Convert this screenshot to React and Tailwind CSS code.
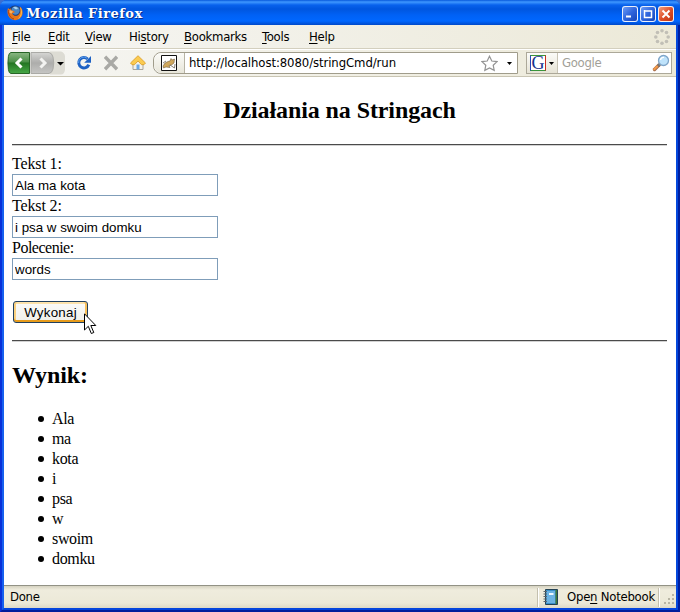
import React from "react";

const MENU = [
  { key: "F", before: "", after: "ile", box: "w-9" },
  { key: "E", before: "", after: "dit", box: "w-[37px]" },
  { key: "V", before: "", after: "iew", box: "w-11" },
  { key: "s", before: "Hi", after: "tory", box: "w-[55px]" },
  { key: "B", before: "", after: "ookmarks", box: "w-[78px]" },
  { key: "T", before: "", after: "ools", box: "w-[47px]" },
  { key: "H", before: "", after: "elp", box: "w-10" },
];

const FIELDS = [
  { label: "Tekst 1:", value: "Ala ma kota", tracking: "tracking-[-0.15px]" },
  { label: "Tekst 2:", value: "i psa w swoim domku", tracking: "tracking-[-0.15px]" },
  { label: "Polecenie:", value: "words", tracking: "tracking-[-0.5px]" },
];

const RESULT = ["Ala", "ma", "kota", "i", "psa", "w", "swoim", "domku"];

const UI_FONT = "font-['DejaVu_Sans_Condensed','DejaVu_Sans',sans-serif] [font-stretch:condensed]";

function FirefoxLogo() {
  return (
    <svg className="h-4 w-4" viewBox="0 0 16 16">
      <circle cx="8" cy="7.5" r="7" fill="#1d3b78" />
      <circle cx="8.5" cy="5.5" r="4.2" fill="#4b87c6" />
      <path d="M6 2.5C8 1 10 2 11 3.5L9 4.5Z" fill="#a9d3f2" />
      <path d="M1 3 C0 6 0 11 4 14 C9 17 16 14 15.6 7 C15.5 4 14 2 12.5 1.5 C14 5 13.5 9 10.5 10.5 C8 11.5 5.5 10 5.3 8.2 L8 7.2 L6.5 5.8 L4 5.2 L3.6 3.2 L2.3 4.3 Z" fill="#e8761a" />
      <path d="M13 2 C16 5 16 12 10.5 14.3 C14 11 14.8 7 13 2Z" fill="#f9bd4a" />
      <path d="M2.3 5L4 5.4L6 6.5L4.6 8.5L2.5 8Z" fill="#f6b36a" />
      <path d="M1.8 5 C1 9 3 13 7 14" fill="none" stroke="#ad3d12" />
    </svg>
  );
}

function WindowButton({ kind }) {
  const tone =
    kind === "close"
      ? "bg-linear-to-br from-[#f29b78] via-[#df5029] to-[#bd3210]"
      : "bg-linear-to-br from-[#6c9bf5] via-[#2f65dd] to-[#1745b8]";
  return (
    <div className={`h-4 w-4 rounded-[3px] border border-white/90 ${tone}`}>
      <svg className="h-3.5 w-3.5" viewBox="0 0 14 14" fill="none" stroke="#fff">
        {kind === "min" && <path d="M3 9.5H8" strokeWidth="2" />}
        {kind === "max" && <path d="M3.5 3V10.5H10.5V4H3.5" strokeWidth="1.5" />}
        {kind === "close" && <path d="M3.5 3.5L10.5 10.5M10.5 3.5L3.5 10.5" strokeWidth="2" />}
      </svg>
    </div>
  );
}

function TitleBar() {
  return (
    <div className="flex h-[25px] shrink-0 items-center bg-[linear-gradient(180deg,#0759dc_0,#3f98ff_2px,#0862ed_5px,#0056df_9px,#0061f5_15px,#0067ff_21px,#0049c9_25px)] pr-1.5 pl-[7px]">
      <FirefoxLogo />
      <span className="mt-[3px] ml-[3px] grow font-['DejaVu_Serif',serif] text-[13px] font-bold tracking-[0.48px] whitespace-nowrap text-white [text-shadow:1px_1px_#0a2c87]">
        Mozilla Firefox
      </span>
      <div className="mt-[3px] flex gap-0.5">
        <WindowButton kind="min" />
        <WindowButton kind="max" />
        <WindowButton kind="close" />
      </div>
    </div>
  );
}

function Throbber() {
  return (
    <svg className="h-4 w-4" viewBox="0 0 16 16" fill="#c1bfb6">
      <circle cx="8" cy="1.8" r="1.8" />
      <circle cx="12.5" cy="3.5" r="1.8" />
      <circle cx="14.2" cy="8" r="1.8" />
      <circle cx="12.5" cy="12.5" r="1.8" />
      <circle cx="8" cy="14.2" r="1.8" />
      <circle cx="3.5" cy="12.5" r="1.8" />
      <circle cx="1.8" cy="8" r="1.8" />
      <circle cx="3.5" cy="3.5" r="1.8" />
    </svg>
  );
}

function MenuBar() {
  return (
    <div className={`flex h-6 shrink-0 items-center border-b border-[#d3cfbe] bg-linear-to-r from-[#f6f6f4] to-[#ece9d8] pr-1.5 pl-2 text-[13px] tracking-[-0.27px] text-black ${UI_FONT}`}>
      {MENU.map((m) => (
        <span key={m.key} className={`shrink-0 whitespace-nowrap ${m.box}`}>
          {m.before}
          <u className="underline-offset-2">{m.key}</u>
          {m.after}
        </span>
      ))}
      <span className="grow" />
      <Throbber />
    </div>
  );
}

function NavButtons() {
  return (
    <svg className="h-6 w-[61px] shrink-0" viewBox="0 0 61 24">
      <defs>
        <linearGradient id="back" x2="0" y2="1">
          <stop stopColor="#8bb884" />
          <stop offset=".45" stopColor="#4b8f47" />
          <stop offset=".5" stopColor="#237522" />
          <stop offset="1" stopColor="#47a846" />
        </linearGradient>
        <linearGradient id="fwd" x2="0" y2="1">
          <stop stopColor="#d6d6d4" />
          <stop offset=".5" stopColor="#adadab" />
          <stop offset="1" stopColor="#c6c6c4" />
        </linearGradient>
      </defs>
      <path d="M46 .5H57Q60 1 61 5Q62.5 12 61 19Q60 23.5 57 23.5H46Z" fill="#dddcd4" />
      <path d="M27 1.5H45Q48 2 49 6Q50.5 12 49 18Q48 22 45 22.5H27Z" fill="url(#fwd)" stroke="#aaaaa6" />
      <path d="M7 1.5H25.5V22.5H7Q5 22.5 4.4 18.5Q3.5 12 4.4 5.5Q5 1.5 7 1.5Z" fill="url(#back)" stroke="#276526" />
      <path d="M17.5 7.5L13 12L17.5 16.5" fill="none" stroke="#fff" strokeWidth="3" />
      <path d="M36.5 7.5L41 12L36.5 16.5" fill="none" stroke="#f3f3f1" strokeWidth="3" />
      <path d="M53 11H60L56.5 14.5Z" fill="#000" />
    </svg>
  );
}

function ReloadIcon() {
  return (
    <svg className="h-4 w-4 shrink-0" viewBox="0 0 16 16">
      <path d="M11.6 4A5.2 5.2 0 1 0 12.8 9.6" fill="none" stroke="#1e62c4" strokeWidth="3" />
      <path d="M15 1V7.8H8.2Z" fill="#1e62c4" />
      <path d="M11 3.2A5.2 5.2 0 0 0 2.6 8" fill="none" stroke="#5a9cea" strokeWidth="1" />
    </svg>
  );
}

function StopIcon() {
  return (
    <svg className="h-4 w-4 shrink-0" viewBox="0 0 16 16">
      <path d="M2 1.8L14 14.2M14 1.8L2 14.2" stroke="#a9a9a5" strokeWidth="3.4" />
    </svg>
  );
}

function HomeIcon() {
  return (
    <svg className="h-4 w-4 shrink-0" viewBox="0 0 16 16">
      <path d="M3 7.5L8 3L13 7.5V14.5H3Z" fill="#f3f2ec" stroke="#a9a59a" />
      <path d="M6.5 9.5H9.5V14.5H6.5Z" fill="#6aa8e6" />
      <path d="M8 .7L15.5 8L14 9.7H11.5L8 6L4.5 9.7H2L.5 8Z" fill="#fbcb50" stroke="#d99a25" strokeWidth=".8" />
    </svg>
  );
}

function CatIcon() {
  return (
    <svg className="h-4 w-4" viewBox="0 0 16 16">
      <path d="M.5 .5H15.5V15.5H.5Z" fill="#fff" stroke="#111" />
      <path d="M2 11L4 8L7 6.5L9 6L10 3.5L11 5L13.5 4L13 8L10.5 10L8 10.5L9 12.5L5 12L2.5 13Z" fill="#cfa75c" stroke="#5d4a2a" strokeWidth=".5" />
      <path d="M9 10L13.5 13L14 9M2 8L5 6" fill="none" stroke="#6b6355" strokeWidth=".8" />
    </svg>
  );
}

function Caret() {
  return (
    <svg className="h-[3px] w-[5px] shrink-0" viewBox="0 0 5 3">
      <path d="M0 0H5L2.5 3Z" fill="#000" />
    </svg>
  );
}

function AddressBar() {
  return (
    <div className="ml-[7px] flex h-[22px] w-[365px] shrink-0 items-center rounded-l-lg border border-[#a09c8b] bg-white">
      <div className="flex h-full w-[31px] items-center justify-center rounded-l-lg border-r border-[#b7b3a4] bg-linear-to-b from-[#fbfbf8] to-[#e8e6da]">
        <CatIcon />
      </div>
      <span className="ml-1 grow text-[13px] tracking-[-0.09px] whitespace-nowrap">http://localhost:8080/stringCmd/run</span>
      <svg className="mr-[9px] h-[17px] w-[17px]" viewBox="0 0 17 17">
        <path d="M8.5 1.2L10.8 6L16 6.6L12.2 10.2L13.2 15.4L8.5 12.9L3.8 15.4L4.8 10.2L1 6.6L6.2 6Z" fill="#fff" stroke="#949494" strokeWidth="1.2" />
      </svg>
      <Caret />
      <span className="w-[5px]" />
    </div>
  );
}

function SearchBar() {
  return (
    <div className="ml-2 flex h-[22px] w-[146px] shrink-0 items-center border border-[#aca899] bg-white">
      <div className="flex h-full w-[31px] items-center gap-[3px] border-r border-[#c8c4b5] bg-linear-to-b from-[#fbfbf8] to-[#e6e3d5] pl-[3px]">
        <div className="flex h-4 w-4 items-center justify-center border border-t-[#39953b] border-r-[#c92c20] border-b-[#39953b] border-l-[#2748bd] bg-white font-['Liberation_Serif',serif] text-[18px] leading-none text-[#16318d]">
          G
        </div>
        <Caret />
      </div>
      <span className="ml-1 grow text-[13px] tracking-[-0.3px] text-[#a29f98]">Google</span>
      <svg className="mr-px h-[18px] w-[18px]" viewBox="0 0 18 18">
        <path d="M2.5 15.5L7 11" stroke="#a2694a" strokeWidth="3.4" strokeLinecap="round" />
        <path d="M2.3 15.2L5 12.5" stroke="#f29a4a" strokeWidth="2.2" strokeLinecap="round" />
        <path d="M6 12L8 10" stroke="#777" strokeWidth="2.5" />
        <circle cx="11.5" cy="6.5" r="5" fill="#bfe3fb" stroke="#7fa5c8" strokeWidth="1.3" />
        <path d="M8.5 6A3.3 3.3 0 0 1 12 3.3" fill="none" stroke="#fff" strokeWidth="1.3" />
      </svg>
    </div>
  );
}

function Toolbar() {
  return (
    <div className={`flex h-7 shrink-0 items-center border-t border-b border-t-white border-b-[#c9c5b3] bg-linear-to-r from-[#f6f6f3] to-[#ece9d8] text-black ${UI_FONT}`}>
      <NavButtons />
      <div className="ml-[11px] flex shrink-0 items-center gap-[11px]">
        <ReloadIcon />
        <StopIcon />
        <HomeIcon />
      </div>
      <AddressBar />
      <SearchBar />
    </div>
  );
}

function Page() {
  return (
    <div className="grow overflow-hidden bg-white pr-[9px] pl-2 font-['Liberation_Serif',serif] text-[16px] leading-5 text-black">
      <h2 className="mt-[19px] text-center text-[24px] leading-7 font-bold tracking-[-0.1px]">Działania na Stringach</h2>
      <hr className="mt-5 h-0.5 border-t border-b border-t-[#4b4b4b] border-b-[#d2d2d2]" />
      <form className="pt-2">
        {FIELDS.map((f) => (
          <label key={f.label} className="block h-[42px]">
            <span className={`block h-5 ${f.tracking}`}>{f.label}</span>
            <input
              readOnly
              defaultValue={f.value}
              className="block h-[22px] w-[206px] border border-[#7f9db9] bg-white px-0.5 font-['Liberation_Sans',sans-serif] text-[13.33px] leading-5 outline-none"
            />
          </label>
        ))}
        <div className="relative mt-[21px] h-[39px]">
          <button
            type="button"
            className="ml-px h-[22px] w-[75px] rounded-[3px] border border-[#1f3f5f] bg-linear-to-b from-[#fbfbf9] to-[#f0f0ea] pt-0.5 font-['Liberation_Sans',sans-serif] text-[13.33px] leading-[18px] tracking-[0.25px] shadow-[inset_0_-2px_#e69b1c,inset_2px_0_#fad17f,inset_-2px_0_#f8c05c,inset_0_2px_#fde3ac]"
          >
            Wykonaj
          </button>
          <svg className="absolute top-3 left-[72px] h-[22px] w-[13px]" viewBox="0 0 13 22">
            <path d="M.5 .8V17L4.3 13.3L7.3 20.5L9.8 19.5L6.8 12.5H11.8Z" fill="#fff" stroke="#000" />
          </svg>
        </div>
      </form>
      <hr className="h-0.5 border-t border-b border-t-[#4b4b4b] border-b-[#d2d2d2]" />
      <h2 className="mt-[19px] text-[24px] leading-7 font-bold tracking-[-0.1px]">Wynik:</h2>
      <ul className="mt-5 tracking-[-0.35px]">
        {RESULT.map((word) => (
          <li key={word} className="flex h-5 items-center pl-[26px]">
            <span className="mr-2 h-1.5 w-1.5 rounded-full bg-black" />
            <span>{word}</span>
          </li>
        ))}
      </ul>
    </div>
  );
}

function StatusBar() {
  return (
    <div className={`flex h-[23px] shrink-0 items-center border-t border-[#929285] bg-[linear-gradient(180deg,#d5d2c1,#efecdd_4px,#ece9d8_17px,#ddd9c6)] pl-1.5 text-[13px] text-black ${UI_FONT}`}>
      <span className="grow tracking-[-0.3px]">Done</span>
      <span className="h-[19px] w-0.5 border-r border-l border-r-white border-l-[#c4c0ae]" />
      <svg className="ml-1 h-4 w-4" viewBox="0 0 16 16">
        <path d="M2.5 .5H14.5V15.5H2.5Z" fill="#3a8fc9" stroke="#244355" />
        <path d="M12.5 1H14V15H12.5Z" fill="#3e7b3b" />
        <path d="M3.5 2H12V14H3.5Z" fill="#6bb3e3" />
        <path d="M6 4H10.5V6H6Z" fill="#eef8ff" />
        <path d="M.5 2.5H4M.5 5H4M.5 7.5H4M.5 10H4M.5 12.5H4" stroke="#59646b" strokeWidth="1" />
      </svg>
      <span className="ml-2 w-[88px] tracking-[-0.25px] whitespace-nowrap">
        Ope<u className="underline-offset-2">n</u> Notebook
      </span>
      <span className="ml-[3px] h-[19px] w-0.5 border-r border-l border-r-white border-l-[#c4c0ae]" />
      <svg className="mt-1.5 ml-1 h-3 w-3" viewBox="0 0 12 12" fill="#b8b5a4">
        <path d="M8 0H10V2H8ZM4 4H6V6H4ZM8 4H10V6H8ZM0 8H2V10H0ZM4 8H6V10H4ZM8 8H10V10H8Z" />
      </svg>
    </div>
  );
}

export default function App() {
  return (
    <div className="h-[612px] w-[680px] overflow-hidden bg-[#3c6ed0]">
      <div className="flex h-full flex-col overflow-hidden rounded-t-[7px] bg-[#0058e6]">
        <TitleBar />
        <div className="flex min-h-0 grow border-x-2 border-b-2 border-r-[#001fa0] border-b-[#001c9c] border-l-[#0831d9]">
          <div className="flex min-w-0 grow flex-col border-x-2 border-b-2 border-r-[#0548dc] border-b-[#0545dc] border-l-[#1660ef]">
            <MenuBar />
            <Toolbar />
            <Page />
            <StatusBar />
          </div>
        </div>
      </div>
    </div>
  );
}
